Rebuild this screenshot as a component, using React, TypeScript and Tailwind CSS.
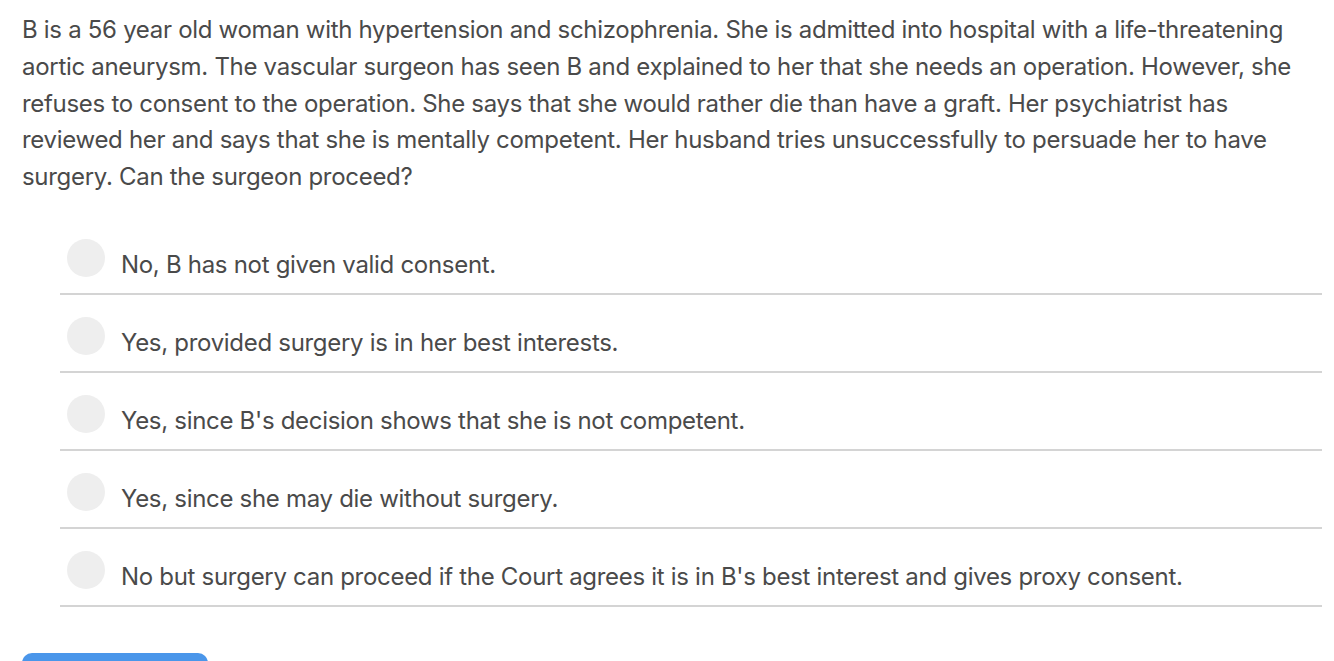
import React from "react";

const options = [
  "No, B has not given valid consent.",
  "Yes, provided surgery is in her best interests.",
  "Yes, since B's decision shows that she is not competent.",
  "Yes, since she may die without surgery.",
  "No but surgery can proceed if the Court agrees it is in B's best interest and gives proxy consent.",
];

export default function App() {
  return (
    <div
      className="w-[1334px] h-[661px] overflow-hidden bg-white text-[#4a4a4a] tracking-[-0.3px]"
      style={{ fontFamily: 'Inter, "Liberation Sans", Arial, sans-serif' }}
    >
      <div className="pl-[22px] pr-[22px] pt-[12px]">
        <p className="text-[24px] leading-[36.75px]">
          B is a 56 year old woman with hypertension and schizophrenia. She is admitted into hospital with a life-threatening aortic aneurysm. The vascular surgeon has seen B and explained to her that she needs an operation. However, she refuses to consent to the operation. She says that she would rather die than have a graft. Her psychiatrist has reviewed her and says that she is mentally competent. Her husband tries unsuccessfully to persuade her to have surgery. Can the surgeon proceed?
        </p>
      </div>
      <div className="ml-[60px] mr-[12px] mt-[21px]">
        {options.map((o) => (
          <div key={o} className="flex items-start h-[78px] border-b-2 border-[#d4d4d4]">
            <div className="w-[38px] h-[38px] rounded-full bg-[#eeeeee] ml-[7px] mt-[22px] shrink-0" />
            <div className="ml-[16px] mt-[30px] text-[24px] leading-[36px]">{o}</div>
          </div>
        ))}
      </div>
      <div className="pl-[22px] mt-[46px]">
        <div className="w-[186px] h-[40px] rounded-[10px] bg-[#4a96ea]" />
      </div>
    </div>
  );
}
